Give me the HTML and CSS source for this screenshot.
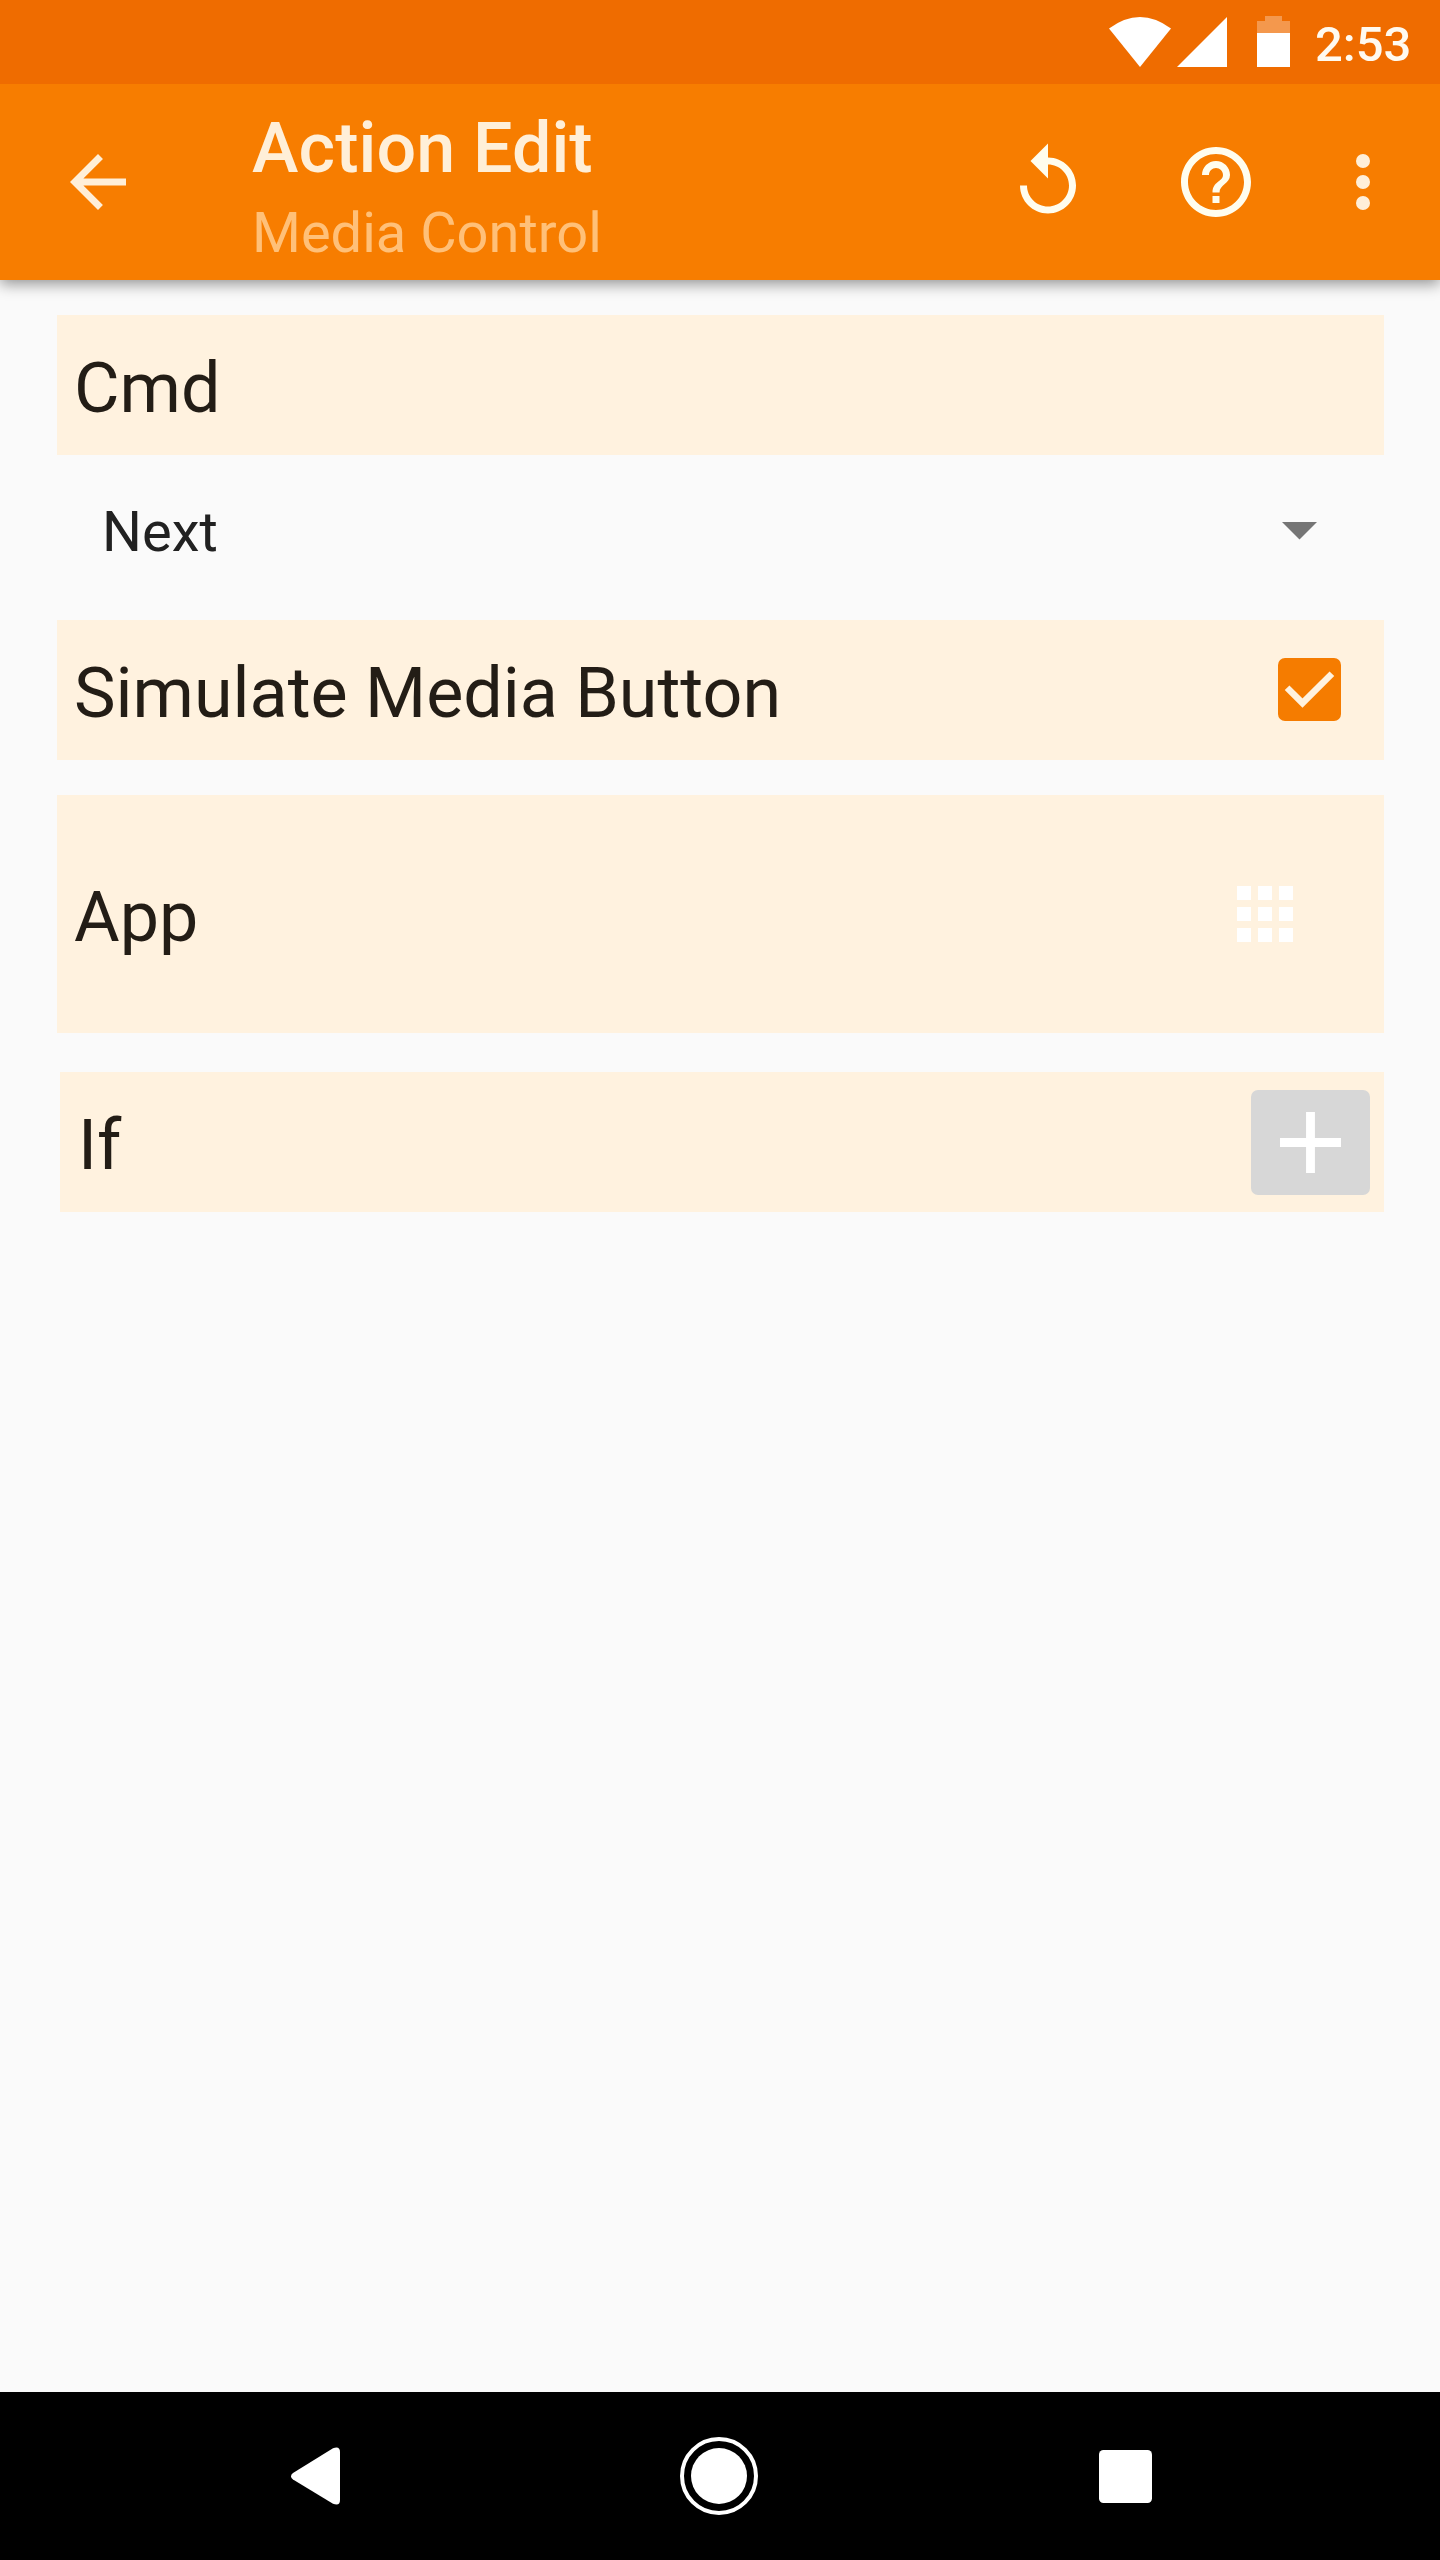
FILE: index.html
```html
<!DOCTYPE html>
<html lang="en">
<head>
<meta charset="utf-8">
<title>Action Edit</title>
<link rel="stylesheet" href="styles.css">
</head>
<body>
<div class="screen">
  <div class="status-bar">
    <svg class="wifi" width="62" height="50" viewBox="0 0 62 50"><path d="M0 11.500Q31-11.500 62 11.500L31 50Z"/></svg>
    <svg class="signal" width="50" height="50" viewBox="0 0 50 50"><path d="M50 0V50H0Z"/></svg>
    <svg class="battery" width="33" height="51" viewBox="0 0 33 51"><path opacity=".3" d="M8 0h17v5h8v12H0V5h8z"/><path d="M0 17h33v34H0z"/></svg>
    <span class="clock">2:53</span>
  </div>
  <header class="toolbar">
    <svg class="icon cream" viewBox="0 0 24 24"><path d="M20 11H7.830l5.590-5.590L12 4l-8 8 8 8 1.410-1.410L7.830 13H20v-2z"/></svg>
    <div class="titles">
      <h1 class="title">Action Edit</h1>
      <p class="subtitle">Media Control</p>
    </div>
    <div class="actions">
      <svg class="icon" viewBox="0 0 24 24"><path d="M12 5V1L7 6l5 5V7c3.310 0 6 2.690 6 6s-2.690 6-6 6-6-2.690-6-6H4c0 4.420 3.580 8 8 8s8-3.580 8-8-3.580-8-8-8z"/></svg>
      <svg class="icon" viewBox="0 0 24 24"><path d="M11 18h2v-2h-2v2zm1-16C6.480 2 2 6.480 2 12s4.480 10 10 10 10-4.480 10-10S17.520 2 12 2zm0 18c-4.410 0-8-3.590-8-8s3.590-8 8-8 8 3.590 8 8-3.590 8-8 8zm0-14c-2.210 0-4 1.790-4 4h2c0-1.100.9-2 2-2s2 .9 2 2c0 2-3 1.750-3 5h2c0-2.250 3-2.500 3-5 0-2.210-1.790-4-4-4z"/></svg>
      <svg class="icon more cream" viewBox="0 0 24 24"><circle cx="12" cy="6" r="2"/><circle cx="12" cy="12" r="2"/><circle cx="12" cy="18" r="2"/></svg>
    </div>
  </header>
  <main class="content">
    <div class="row"><span class="label">Cmd</span></div>
    <div class="spinner">
      <span class="value">Next</span>
      <svg width="35" height="18" viewBox="0 0 35 18"><path d="M0 0h35L17.500 17.500z"/></svg>
    </div>
    <div class="row">
      <span class="label">Simulate Media Button</span>
      <svg class="checkbox" width="63" height="63" viewBox="0 0 18 18"><rect width="18" height="18" rx="2"/><path d="M2.600 8.500L7 12.900L15.400 4.500"/></svg>
    </div>
    <div class="row app">
      <span class="label">App</span>
      <svg class="grid" width="56" height="56" viewBox="4 4 16 16"><path d="M4 8h4V4H4v4zm6 12h4v-4h-4v4zm-6 0h4v-4H4v4zm0-6h4v-4H4v4zm6 0h4v-4h-4v4zm6-10v4h4V4h-4zm-6 4h4V4h-4v4zm6 6h4v-4h-4v4zm0 6h4v-4h-4v4z"/></svg>
    </div>
    <div class="row condition">
      <span class="label">If</span>
      <div class="add"><svg width="61" height="61" viewBox="0 0 62 62"><path d="M26.500 0h9v26.500H62v9H35.500V62h-9V35.500H0v-9h26.500z"/></svg></div>
    </div>
  </main>
  <nav class="nav-bar">
    <svg width="50" height="58" viewBox="0 0 50 58"><path d="M2 26L42 1.200Q49 -1.500 49 5V53Q49 59.500 42 56.800L2 32.500Q-2 29 2 26Z"/></svg>
    <svg class="home" width="80" height="80" viewBox="0 0 80 80"><circle cx="40" cy="40" r="28"/><circle class="ring" cx="40" cy="40" r="37"/></svg>
    <svg width="53" height="53" viewBox="0 0 53 53"><rect width="53" height="53" rx="4.500"/></svg>
  </nav>
</div>
</body>
</html>
```
FILE: styles.css
```css
* { box-sizing: border-box; }
body { margin: 0; font-family: Roboto, "Liberation Sans", sans-serif; }
svg { display: block; flex: none; fill: #fff; }
.screen {
  display: flex;
  flex-direction: column;
  width: 1440px;
  height: 2560px;
  background: #fafafa;
}
.status-bar {
  display: flex;
  height: 84px;
  padding: 16px 28px 0 1109px;
  background: #ef6c00;
}
.wifi, .signal { margin-top: 1px; }
.signal { margin-left: 6px; }
.battery { margin-left: 30px; }
.clock {
  margin-left: 25px;
  font-size: 49px;
  font-weight: 500;
  line-height: 57px;
  color: #fffaf0;
}
.toolbar {
  display: flex;
  align-items: center;
  height: 196px;
  padding-left: 56px;
  background: #f77d00;
  box-shadow: 0 4px 14px rgba(0, 0, 0, .42);
  clip-path: inset(0 0 -30px 0);
}
.icon { width: 84px; height: 84px; fill: #fffdee; }
.cream { fill: #ffefd8; }
.titles { margin-left: 112px; padding-top: 8px; }
.title, .subtitle { margin: 0; white-space: nowrap; }
.title {
  font-size: 70px;
  font-weight: 500;
  line-height: 82px;
  letter-spacing: .1px;
  color: #ffefd8;
}
.subtitle {
  margin-top: 11px;
  font-size: 56px;
  font-weight: 400;
  line-height: 66px;
  color: #ffc078;
}
.actions { display: flex; margin-left: auto; padding-right: 35px; }
.actions .icon { margin-left: 84px; }
.actions .more { margin-left: 63px; }
.content { flex: 1; padding: 35px 56px 0 57px; }
.row {
  display: flex;
  align-items: center;
  justify-content: space-between;
  height: 140px;
  padding: 0 17px;
  background: #fff2df;
}
.label {
  padding-top: 5px;
  font-size: 70px;
  line-height: 82px;
  color: #231d16;
}
.spinner {
  display: flex;
  align-items: center;
  justify-content: space-between;
  height: 153px;
  margin-bottom: 12px;
  padding: 0 67px 0 45px;
}
.spinner svg { margin-bottom: 2px; fill: #757575; }
.value { font-size: 56px; line-height: 66px; color: #212121; }
.checkbox { margin: 0 26px 1px 0; fill: #f57c00; }
.checkbox path { fill: none; stroke: #fff2df; stroke-width: 1.9; }
.app { height: 238px; margin-top: 35px; }
.grid { margin-right: 74px; }
.condition { margin: 39px 0 0 3px; padding: 0 14px 0 18px; }
.add {
  display: flex;
  align-items: center;
  justify-content: center;
  width: 119px;
  height: 105px;
  border-radius: 7px;
  background: #d7d7d7;
}
.nav-bar {
  display: flex;
  align-items: center;
  justify-content: space-between;
  height: 168px;
  padding: 0 288px 0 291px;
  background: #000;
}
.home { margin: 0 2px 1px 0; }
.ring { fill: none; stroke: #fff; stroke-width: 4; }
```
